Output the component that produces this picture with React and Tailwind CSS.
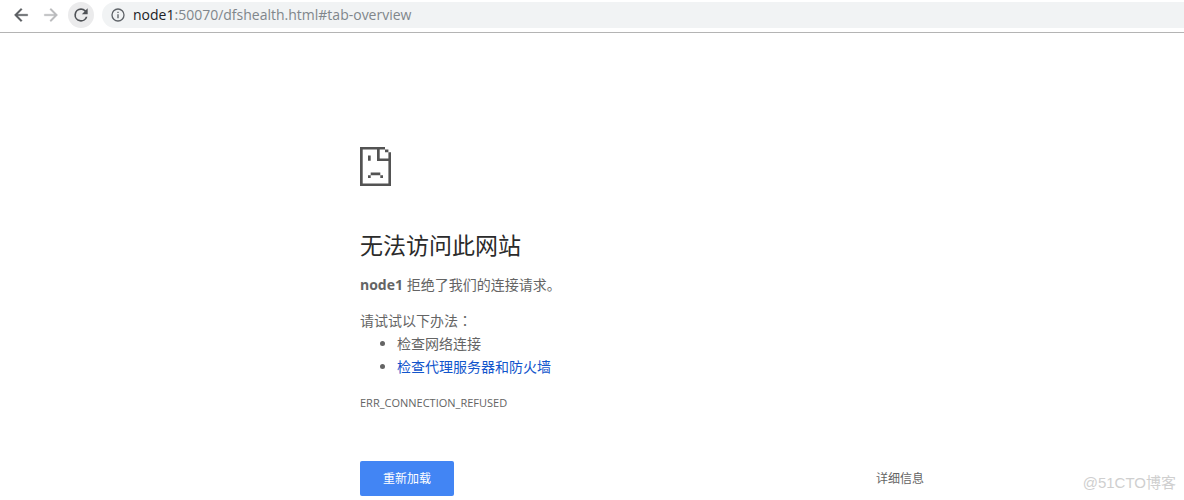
import React from 'react';

const font = "font-['Open_Sans','Noto_Sans_CJK_SC',sans-serif]";

const BackIcon = ({ className }) => (
  <svg viewBox="0 0 24 24" className={className} fill="currentColor" stroke="currentColor" strokeWidth="0.4" aria-hidden="true">
    <path d="M20 11H7.83l5.59-5.59L12 4l-8 8 8 8 1.41-1.41L7.83 13H20v-2z" />
  </svg>
);

const ForwardIcon = ({ className }) => (
  <svg viewBox="0 0 24 24" className={className} fill="currentColor" stroke="currentColor" strokeWidth="0.4" aria-hidden="true">
    <path d="M12 4l-1.41 1.41L16.17 11H4v2h12.17l-5.58 5.59L12 20l8-8z" />
  </svg>
);

const ReloadIcon = ({ className }) => (
  <svg viewBox="0 0 24 24" className={className} fill="currentColor" aria-hidden="true">
    <path d="M17.65 6.35A7.96 7.96 0 0 0 12 4a8 8 0 1 0 7.73 10h-2.08A6 6 0 1 1 12 6c1.66 0 3.14.69 4.22 1.78L13 11h7V4l-2.35 2.35z" />
  </svg>
);

const InfoIcon = ({ className }) => (
  <svg viewBox="0 0 24 24" className={className} fill="currentColor" aria-hidden="true">
    <path d="M11 7h2v2h-2zm0 4h2v6h-2zm1-9a10 10 0 1 0 0 20 10 10 0 0 0 0-20zm0 18a8 8 0 1 1 0-16 8 8 0 0 1 0 16z" />
  </svg>
);

// Pixel-art page with a folded corner and a sad face
const SadPageIcon = ({ className }) => (
  <svg viewBox="0 0 31 39" className={className} fill="currentColor" aria-hidden="true">
    <path d="M0 0h25v2.6h-5.3v8.8h8.7V5.3H31V39H0zM2.7 2.6v33.8h25.7V14H17V2.6z" fillRule="evenodd" />
    <path d="M25 2.6h3.4v2.7H25zM8 8.6h2.7v5.2H8zM10.7 25.6h9.6v2.7h-9.6zM8 28.3h2.7V31H8zM20.3 28.3H23V31h-2.7z" />
  </svg>
);

const Toolbar = () => (
  <header className="flex h-[33px] items-center border-b border-[#b4b4b4] pb-0.5 pl-2">
    <button aria-label="后退" className="flex size-[26px] items-center justify-center text-[#5a5d61]">
      <BackIcon className="size-5" />
    </button>
    <button aria-label="前进" disabled className="ml-1 flex size-[26px] items-center justify-center text-[#b9babc]">
      <ForwardIcon className="size-5" />
    </button>
    <button aria-label="重新加载此页" className="ml-1 flex size-[26px] items-center justify-center rounded-full bg-[#ebebec] text-[#4f5256]">
      <ReloadIcon className="size-5" />
    </button>
    <div className="ml-2 flex h-[26px] flex-1 items-center rounded-l-full bg-[#f1f3f4] pl-2">
      <InfoIcon className="size-4 text-[#5f6368]" />
      <span className="ml-[7px] text-sm text-[#80868b]">
        <span className="text-[#202124]">node1</span>:50070/dfshealth.html#tab-overview
      </span>
    </div>
  </header>
);

const App = () => {
  return (
    <div className={`relative min-h-screen bg-white text-[#646464] ${font}`}>
      <Toolbar />
      <main className="pl-[100px]">
        <div className="mx-auto max-w-[564px] pt-[114px] text-sm">
          <SadPageIcon className="h-[39px] w-[31px] text-[#535353]" />
          <h1 className="mt-[43px] text-[23px] leading-8 text-[#2b2b2b]">无法访问此网站</h1>
          <p className="mt-3 leading-6">
            <strong>node1</strong> 拒绝了我们的连接请求。
          </p>
          <div className="mt-3 leading-[23px]">
            <p>
              请试试以下办法<span className="font-['Noto_Sans_CJK_TC',sans-serif]">：</span>
            </p>
            <ul className="list-disc pl-[37px]">
              <li>检查网络连接</li>
              <li>
                <a href="#proxy" className="text-[#1155cc]">检查代理服务器和防火墙</a>
              </li>
            </ul>
          </div>
          <p className="mt-[15px] text-[11px] leading-5">ERR_CONNECTION_REFUSED</p>
          <div className="mt-12 flex items-center justify-between text-xs">
            <button className="h-[35px] rounded-xs bg-[#4285f4] px-[23px] text-white">重新加载</button>
            <button className="h-[35px]">详细信息</button>
          </div>
        </div>
      </main>
      <span className="absolute right-2 bottom-1.5 font-['Liberation_Sans','Noto_Sans_CJK_SC',sans-serif] text-[15px] text-[#cfcfcf]">
        @51CTO博客
      </span>
    </div>
  );
};

export default App;
